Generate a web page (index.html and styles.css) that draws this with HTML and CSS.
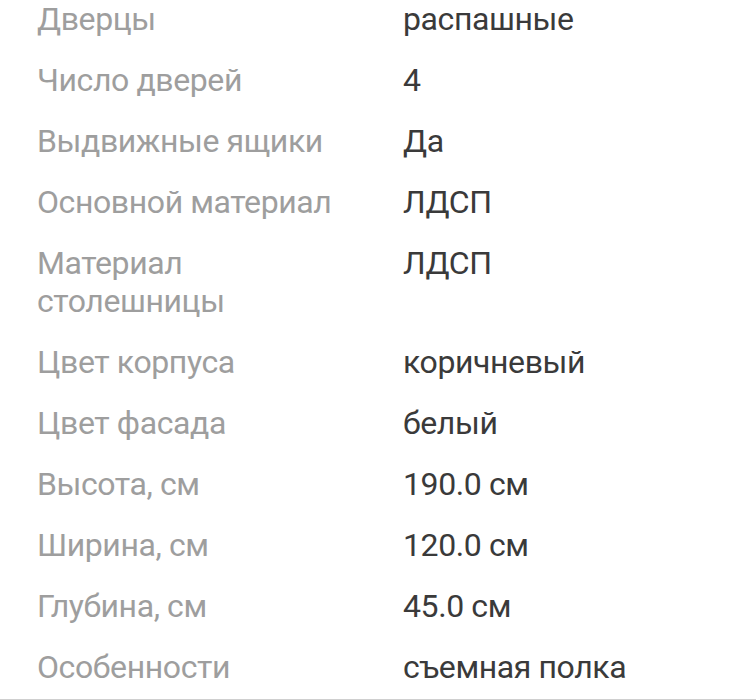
FILE: index.html
```html
<!DOCTYPE html>
<html lang="ru">
<head>
<meta charset="utf-8">
<link rel="stylesheet" href="styles.css">
</head>
<body>
<div class="specs">
  <dl class="spec-list">
    <dt>Дверцы</dt><dd>распашные</dd>
    <dt>Число дверей</dt><dd>4</dd>
    <dt>Выдвижные ящики</dt><dd>Да</dd>
    <dt>Основной материал</dt><dd>ЛДСП</dd>
    <dt>Материал столешницы</dt><dd>ЛДСП</dd>
    <dt>Цвет корпуса</dt><dd>коричневый</dd>
    <dt>Цвет фасада</dt><dd>белый</dd>
    <dt>Высота, см</dt><dd>190.0 см</dd>
    <dt>Ширина, см</dt><dd>120.0 см</dd>
    <dt>Глубина, см</dt><dd>45.0 см</dd>
    <dt>Особенности</dt><dd>съемная полка</dd>
  </dl>
</div>
</body>
</html>
```
FILE: styles.css
```css
html, body {
  margin: 0;
  padding: 0;
  background: #ffffff;
}
body {
  font-family: Roboto, "Noto Sans", sans-serif;
  font-size: 32px;
  line-height: 38px;
  letter-spacing: -0.4px;
}
.specs {
  border-bottom: 2px solid #cfcfcf;
  padding-bottom: 13px;
}
.spec-list {
  margin: 0;
  padding: 0 0 0 37px;
  display: grid;
  grid-template-columns: 366px 1fr;
  row-gap: 23px;
}
.spec-list dt {
  color: #9e9e9e;
  padding-right: 40px;
}
.spec-list dd {
  margin: 0;
  color: #3a3a3a;
}
```
